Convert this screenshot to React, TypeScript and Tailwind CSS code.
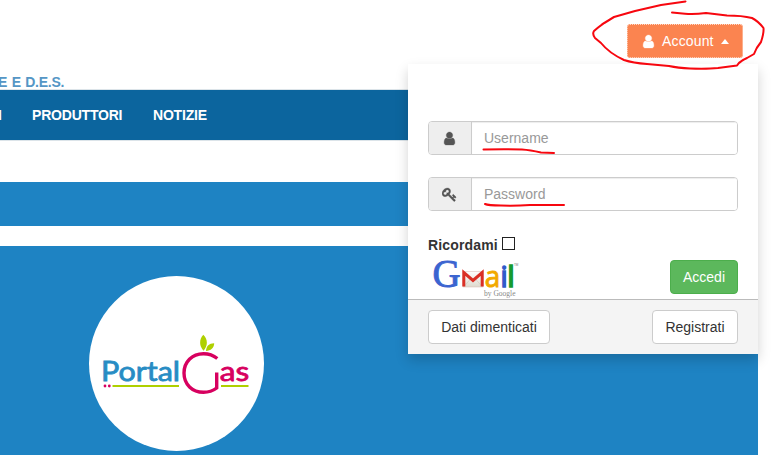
import React from "react";

const USER =
  "M1536 1399q0 109-62.5 187t-150.5 78h-854q-88 0-150.5-78t-62.5-187q0-85 8.5-160.5t31.5-152 58.5-131 94-89 134.5-34.5q131 128 313 128t313-128q76 0 134.5 34.5t94 89 58.5 131 31.5 152 8.5 160.5zm-256-887q0 159-112.5 271.5t-271.5 112.5-271.5-112.5-112.5-271.5 112.5-271.5 271.5-112.5 271.5 112.5 112.5 271.5z";
const KEY =
  "M832 512q0-80-56-136t-136-56-136 56-56 136q0 42 19 83-41-19-83-19-80 0-136 56t-56 136 56 136 136 56 136-56 56-136q0-42-19-83 41 19 83 19 80 0 136-56t56-136zm851 704q0 17-49 66t-66 49q-9 0-28.5-16t-36.5-33-38.5-40-24.5-26l-96 96 220 220q28 28 28 68 0 42-39 81t-81 39q-40 0-68-28l-671-671q-176 131-365 131-163 0-265.5-102.5t-102.5-265.5q0-160 95-313t248-248 313-95q163 0 265.5 102.5t102.5 265.5q0 189-131 365l355 355 96-96q-3-3-26-24.5t-40-38.5-33-36.5-16-28.5q0-17 49-66t66-49q13 0 23 10 6 6 46 44.5t82 79.5 86.5 86 73 78 28.5 41z";

function Icon({ d }: { d: string }) {
  return (
    <svg className="size-[15px] shrink-0" viewBox="0 0 1792 1792" fill="currentColor" stroke="currentColor" strokeWidth="40">
      <path d={d} />
    </svg>
  );
}

function Field({ icon, placeholder, type }: { icon: string; placeholder: string; type: string }) {
  return (
    <div className="flex h-[34px] overflow-hidden rounded border border-[#ccc]">
      <span className="flex w-[43px] shrink-0 items-center justify-center border-r border-[#ccc] bg-[#eee] pr-0.5 text-[#555]">
        <Icon d={icon} />
      </span>
      <input
        type={type}
        placeholder={placeholder}
        className="min-w-0 flex-1 bg-white px-3 text-sm shadow-[inset_0_1px_1px_rgba(0,0,0,0.075)] outline-none placeholder:text-[#999]"
      />
    </div>
  );
}

function PortalGasLogo() {
  return (
    <svg width="175" height="175" viewBox="89 276 175 175" className="block">
      <g fontFamily="Lato, 'Open Sans', sans-serif" fontWeight="400" strokeWidth="0.8">
        <text x="101" y="381.300" fontSize="27" fill="#278cc4" stroke="#278cc4" textLength="79" lengthAdjust="spacingAndGlyphs">
          Portal
        </text>
        <text x="219.800" y="381.300" fontSize="27" fill="#d7005f" stroke="#d7005f" textLength="29.500" lengthAdjust="spacingAndGlyphs">
          as
        </text>
      </g>
      <path
        d="M217.300 358.500C213 355 208.500 353.700 203.500 353.700C192 353.700 184 362 184 373C184 384.500 192.300 392.300 203.500 392.300C208.500 392.300 213 390.800 216.700 388V372.500"
        fill="none"
        stroke="#d7005f"
        strokeWidth="3.400"
      />
      <path d="M203.300 334.800C199 339.500 199 346 203.500 350.700C208 346 208 339.500 203.300 334.800Z" fill="#afd000" />
      <path d="M206 351C206.200 346 209.300 343.200 214.200 343.300C214 348 210.800 350.900 206 351Z" fill="#afd000" />
      <path d="M112.500 386H179M221 386H248.500" stroke="#afd000" strokeWidth="2" />
      <circle cx="105" cy="386" r="1.400" fill="#d7005f" />
      <circle cx="109.300" cy="386" r="1.400" fill="#d7005f" />
    </svg>
  );
}

function GmailLogo() {
  return (
    <svg width="90" height="40" viewBox="430 258 90 40" className="block overflow-visible">
      <defs>
        <linearGradient id="paper" x1="0" y1="0" x2="0" y2="1">
          <stop offset="0" stopColor="#fff" />
          <stop offset="1" stopColor="#ddd9cd" />
        </linearGradient>
      </defs>
      <text x="432.400" y="287.300" fontSize="39" fill="#3b64d0" stroke="#3b64d0" strokeWidth="0.900" fontFamily="'Liberation Serif', serif" textLength="28" lengthAdjust="spacingAndGlyphs">
        G
      </text>
      <rect x="463" y="271.500" width="20" height="15.500" fill="url(#paper)" stroke="#d8b8b0" strokeWidth="0.500" />
      <path d="M464 286.500L470.500 279M482 286.500L475.500 279" stroke="#ccc6b8" strokeWidth="0.600" />
      <path d="M463.800 286.500V272.500L473 280.500L482.200 272.500V286.500" fill="none" stroke="#da2f25" strokeWidth="3" />
      <g fontFamily="'Open Sans', sans-serif">
        <text x="484.800" y="287" fontSize="29" fill="#f2a900" stroke="#f2a900" strokeWidth="0.900" textLength="15.500" lengthAdjust="spacingAndGlyphs">
          a
        </text>
        <text x="500.600" y="287" fontSize="28.500" fill="#2f5bc9" stroke="#2f5bc9" strokeWidth="1.500">
          i
        </text>
        <text x="507.300" y="287" fontSize="29.500" fill="#159b2e" stroke="#159b2e" strokeWidth="1.600">
          l
        </text>
      </g>
      <text x="514" y="266" fontSize="3" fill="#777" fontFamily="'Liberation Sans', sans-serif">
        TM
      </text>
      <text x="484" y="295.500" fontSize="7.500" fill="#888" fontFamily="'Liberation Serif', serif">
        by Google
      </text>
    </svg>
  );
}

function LoginMenu() {
  return (
    <div className="absolute left-[408px] top-16 flex h-[290px] w-[350px] flex-col bg-white shadow-[0_6px_12px_rgba(0,0,0,0.175)]">
      <div className="flex flex-1 flex-col px-5 pt-[57px]">
        <Field icon={USER} placeholder="Username" type="text" />
        <div className="h-[22px]" />
        <Field icon={KEY} placeholder="Password" type="password" />
        <label className="mt-6 flex h-5 items-center gap-1 text-sm font-bold text-[#333]">
          <span className="w-[70px] tracking-[0.15px]">Ricordami</span>
          <input type="checkbox" className="mb-[3px] size-[13px] appearance-none border border-[#222] bg-white" />
        </label>
        <div className="flex justify-between pl-0.5 pt-[3px]">
          <GmailLogo />
          <button className="mt-0.5 h-[34px] w-[68px] rounded border border-[#4cae4c] bg-[#5cb85c] text-sm text-white">
            Accedi
          </button>
        </div>
      </div>
      <div className="flex h-[55px] shrink-0 justify-between border-t border-[#bbb] bg-[#f4f4f4] px-5 pt-2.5 text-sm text-[#333]">
        <button className="h-[34px] w-[122px] rounded border border-[#ccc] bg-white">Dati dimenticati</button>
        <button className="h-[34px] w-[86px] rounded border border-[#ccc] bg-white">Registrati</button>
      </div>
    </div>
  );
}

export default function App() {
  return (
    <div className="relative h-[455px] w-[775px] overflow-hidden bg-white font-['Liberation_Sans',Arial,sans-serif]">
      <div className="flex h-full w-[758px] flex-col">
        <header className="flex h-[89px] shrink-0 justify-between pr-[15px]">
          <div className="mt-[73px] h-4 whitespace-nowrap text-sm leading-[18px] font-bold tracking-[-0.25px] text-[#5596c5] [word-spacing:0.9px]">
            <span className="-ml-[2px]">E E D.E.S.</span>
          </div>
          <button className="mt-6 flex h-[34px] w-[116px] items-center rounded-[3px] border border-[#fb8450] bg-[#fb8450] pl-[13px] text-sm text-white outline-1 -outline-offset-1 outline-dotted outline-[#ffd9c8]">
            <Icon d={USER} />
            <span className="ml-1.5 tracking-[0.15px]">Account</span>
            <span className="ml-[7px] size-0 border-x-[4.5px] border-b-[5px] border-x-transparent border-b-white" />
          </button>
        </header>
        <nav className="flex h-[52px] shrink-0 items-center border-y border-[#dce4e9] bg-[#0c659e] text-sm font-bold tracking-[-0.2px] text-white">
          <span className="-ml-0.5 w-[34px]">I</span>
          <span className="w-[121px]">PRODUTTORI</span>
          <span>NOTIZIE</span>
        </nav>
        <div className="mt-[41px] h-11 shrink-0 bg-[#1e83c3]" />
        <main className="mt-5 flex-1 bg-[#1e83c3] pl-[89px] pt-[30px]">
          <div className="size-[175px] rounded-full bg-white">
            <PortalGasLogo />
          </div>
        </main>
      </div>
      <LoginMenu />
      <svg className="pointer-events-none absolute inset-0" width="775" height="455" fill="none" stroke="#f7070f" strokeWidth="2" strokeLinecap="round" strokeLinejoin="round">
        <path d="M685.500 1.500L661 5L635 11L614 17Q603 23 594 31Q592 34 595 38L601 43Q609 53 624 60Q633 63 647 64L669 66Q678 68 690 68.500Q708 69 718 68L737 65.500Q740 61 747 58L754 54Q756 48 761 42Q764 33 763.500 28Q758 21 752 18Q742 15.500 727 15.500L706 13Q694 14.500 685 13.700L672 12.500" />
        <path d="M483.500 149.500Q505 149 522 149.500Q530 150 541 152.500L554 153" />
        <path d="M485 204Q488 205.500 501 205.500Q515 206 530 205L564 205" />
      </svg>
    </div>
  );
}
